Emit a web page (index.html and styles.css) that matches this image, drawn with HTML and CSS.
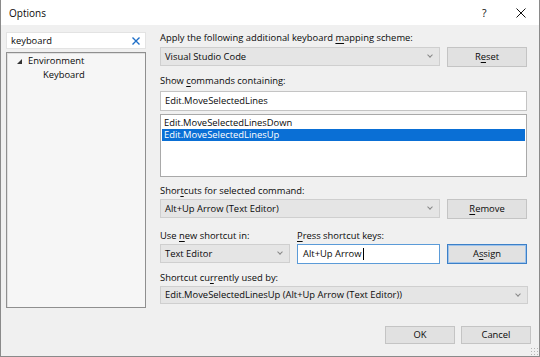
FILE: index.html
```html
<!DOCTYPE html>
<html lang="en">
<head>
  <meta charset="UTF-8" />
  <title>Options</title>
  <link rel="stylesheet" href="styles.css">
</head>
<body>
  <div class="dialog">
    <div class="titlebar">
      <span class="title">Options</span>
      <span class="help">?</span>
      <span class="close">
        <svg width="10" height="10" viewBox="0 0 10 10"><path d="M0.5 0.5 L9.5 9.5 M9.5 0.5 L0.5 9.5" stroke="#111" stroke-width="1"/></svg>
      </span>
    </div>
    <div class="content">
      <div class="left">
        <div class="search">
          <span>keyboard</span>
          <svg width="8" height="8" viewBox="0 0 8 8"><path d="M0.5 0.5 L7.5 7.5 M7.5 0.5 L0.5 7.5" stroke="#1e6fc8" stroke-width="1.4"/></svg>
        </div>
        <div class="tree">
          <div class="node"><span class="arrow"></span>Environment</div>
          <div class="node child">Keyboard</div>
        </div>
      </div>
      <div class="right">
        <div class="label first">Apply the following additional keyboard <u>m</u>apping scheme:</div>
        <div class="row">
          <div class="combo wide">Visual Studio Code<span class="chev"></span></div>
          <div class="button">R<u>e</u>set</div>
        </div>
        <div class="label">Show <u>c</u>ommands containing:</div>
        <div class="input full">Edit.MoveSelectedLines</div>
        <div class="list">
          <div class="item">Edit.MoveSelectedLinesDown</div>
          <div class="item selected">Edit.MoveSelectedLinesUp</div>
        </div>
        <div class="label">Shor<u>t</u>cuts for selected command:</div>
        <div class="row">
          <div class="combo wide">Alt+Up Arrow (Text Editor)<span class="chev"></span></div>
          <div class="button"><u>R</u>emove</div>
        </div>
        <div class="row labels">
          <div class="label col-scope">Use <u>n</u>ew shortcut in:</div>
          <div class="label"><u>P</u>ress shortcut keys:</div>
        </div>
        <div class="row">
          <div class="combo scope">Text Editor<span class="chev"></span></div>
          <div class="input keys">Alt+Up Arrow<span class="caret"></span></div>
          <div class="button focus">A<u>s</u>sign</div>
        </div>
        <div class="label">Shortcut cu<u>r</u>rently used by:</div>
        <div class="combo full">Edit.MoveSelectedLinesUp (Alt+Up Arrow (Text Editor))<span class="chev"></span></div>
        <div class="footer">
          <div class="button dlg">OK</div>
          <div class="button dlg">Cancel</div>
        </div>
      </div>
    </div>
    <div class="grip"></div>
  </div>
</body>
</html>
```

FILE: styles.css
```css
* {
  box-sizing: border-box;
}
body {
  margin: 0;
  font-family: "Open Sans", "Noto Sans", sans-serif;
  font-size: 9.4px;
  color: #0a0a0a;
  background: #ffffff;
}
u {
  text-decoration-thickness: 1px;
  text-underline-offset: 1.5px;
}
.dialog {
  position: relative;
  width: 540px;
  height: 357px;
  border: 1px solid #8a8a8a;
  border-top: none;
  background: #f0f0f0;
}
.titlebar {
  height: 25px;
  background: #ffffff;
  display: flex;
  align-items: center;
  padding-left: 8px;
  font-size: 10px;
}
.title {
  flex: 1;
}
.help {
  width: 12px;
  margin-right: 22px;
  font-size: 10.5px;
}
.close {
  display: flex;
  margin-right: 13px;
}
.content {
  display: flex;
  padding: 7px 0 0 5px;
  gap: 14px;
}
.left {
  width: 140px;
}
.search {
  height: 17px;
  background: #ffffff;
  border: 1px solid #e3e3e3;
  display: flex;
  align-items: center;
  justify-content: space-between;
  padding: 0 5px 0 4px;
}
.tree {
  margin-top: 3px;
  height: 256px;
  background: #f6f6f6;
  border: 1px solid #8f8f8f;
  box-shadow: inset 1px 1px 0 #e0e0e0;
  padding-top: 1px;
}
.node {
  height: 14px;
  line-height: 14px;
  padding-left: 21px;
  position: relative;
}
.node.child {
  padding-left: 36px;
}
.arrow {
  position: absolute;
  left: 10px;
  top: 5px;
  width: 0;
  height: 0;
  border-left: 5px solid transparent;
  border-bottom: 5px solid #333;
}
.right {
  width: 369px;
  margin-top: -2px;
}
.label {
  height: 16px;
  line-height: 16px;
  margin-top: 6px;
}
.label.first {
  margin-top: 0;
  margin-bottom: 1px;
}
.row {
  display: flex;
  gap: 7px;
}
.row.labels {
  margin-top: 9px;
}
.row.labels .label {
  margin-top: 0;
}
.col-scope {
  width: 130px;
}
.combo {
  position: relative;
  height: 19px;
  line-height: 17px;
  background: #e5e5e5;
  border: 1px solid #cfcfcf;
  padding-left: 4px;
}
.combo.wide {
  width: 280px;
}
.combo.scope {
  width: 130px;
}
.combo.full {
  width: 368px;
  height: 18px;
  line-height: 16px;
}
.chev {
  position: absolute;
  right: 7px;
  top: 5px;
  width: 4px;
  height: 4px;
  border-right: 1px solid #888;
  border-bottom: 1px solid #888;
  transform: rotate(45deg);
}
.button {
  width: 80px;
  height: 20px;
  line-height: 18px;
  text-align: center;
  background: #e1e1e1;
  border: 1px solid #c4c4c4;
}
.button.focus {
  border: 1px solid #3c80c8;
  box-shadow: inset 0 0 0 1px #9fc3ea;
}
.input {
  height: 20px;
  line-height: 18px;
  background: #ffffff;
  border: 1px solid #c4c4c4;
  padding-left: 4px;
}
.input.full {
  width: 367px;
  margin-top: 2px;
}
.input.keys {
  width: 143px;
  border-color: #5b9bd8;
  padding-left: 5px;
  display: flex;
  align-items: center;
}
.caret {
  width: 1px;
  height: 12px;
  background: #000;
  margin-left: 1px;
}
.list {
  margin-top: 3px;
  width: 367px;
  height: 63px;
  background: #ffffff;
  border: 1px solid #a9a9a9;
  padding: 2px 1px 0 1px;
}
.item {
  height: 12px;
  line-height: 12px;
  padding-left: 2px;
}
.item.selected {
  background: #0a6fd5;
  color: #ffffff;
}
.footer {
  display: flex;
  justify-content: flex-end;
  gap: 6px;
  margin-top: 22px;
  margin-right: -2px;
}
.button.dlg {
  width: 70px;
  height: 18px;
  line-height: 16px;
}
.grip {
  position: absolute;
  right: 1px;
  bottom: 1px;
  width: 8px;
  height: 8px;
  background-image: radial-gradient(circle, #b5b5b5 0.8px, transparent 1px);
  background-size: 3px 3px;
}
```
